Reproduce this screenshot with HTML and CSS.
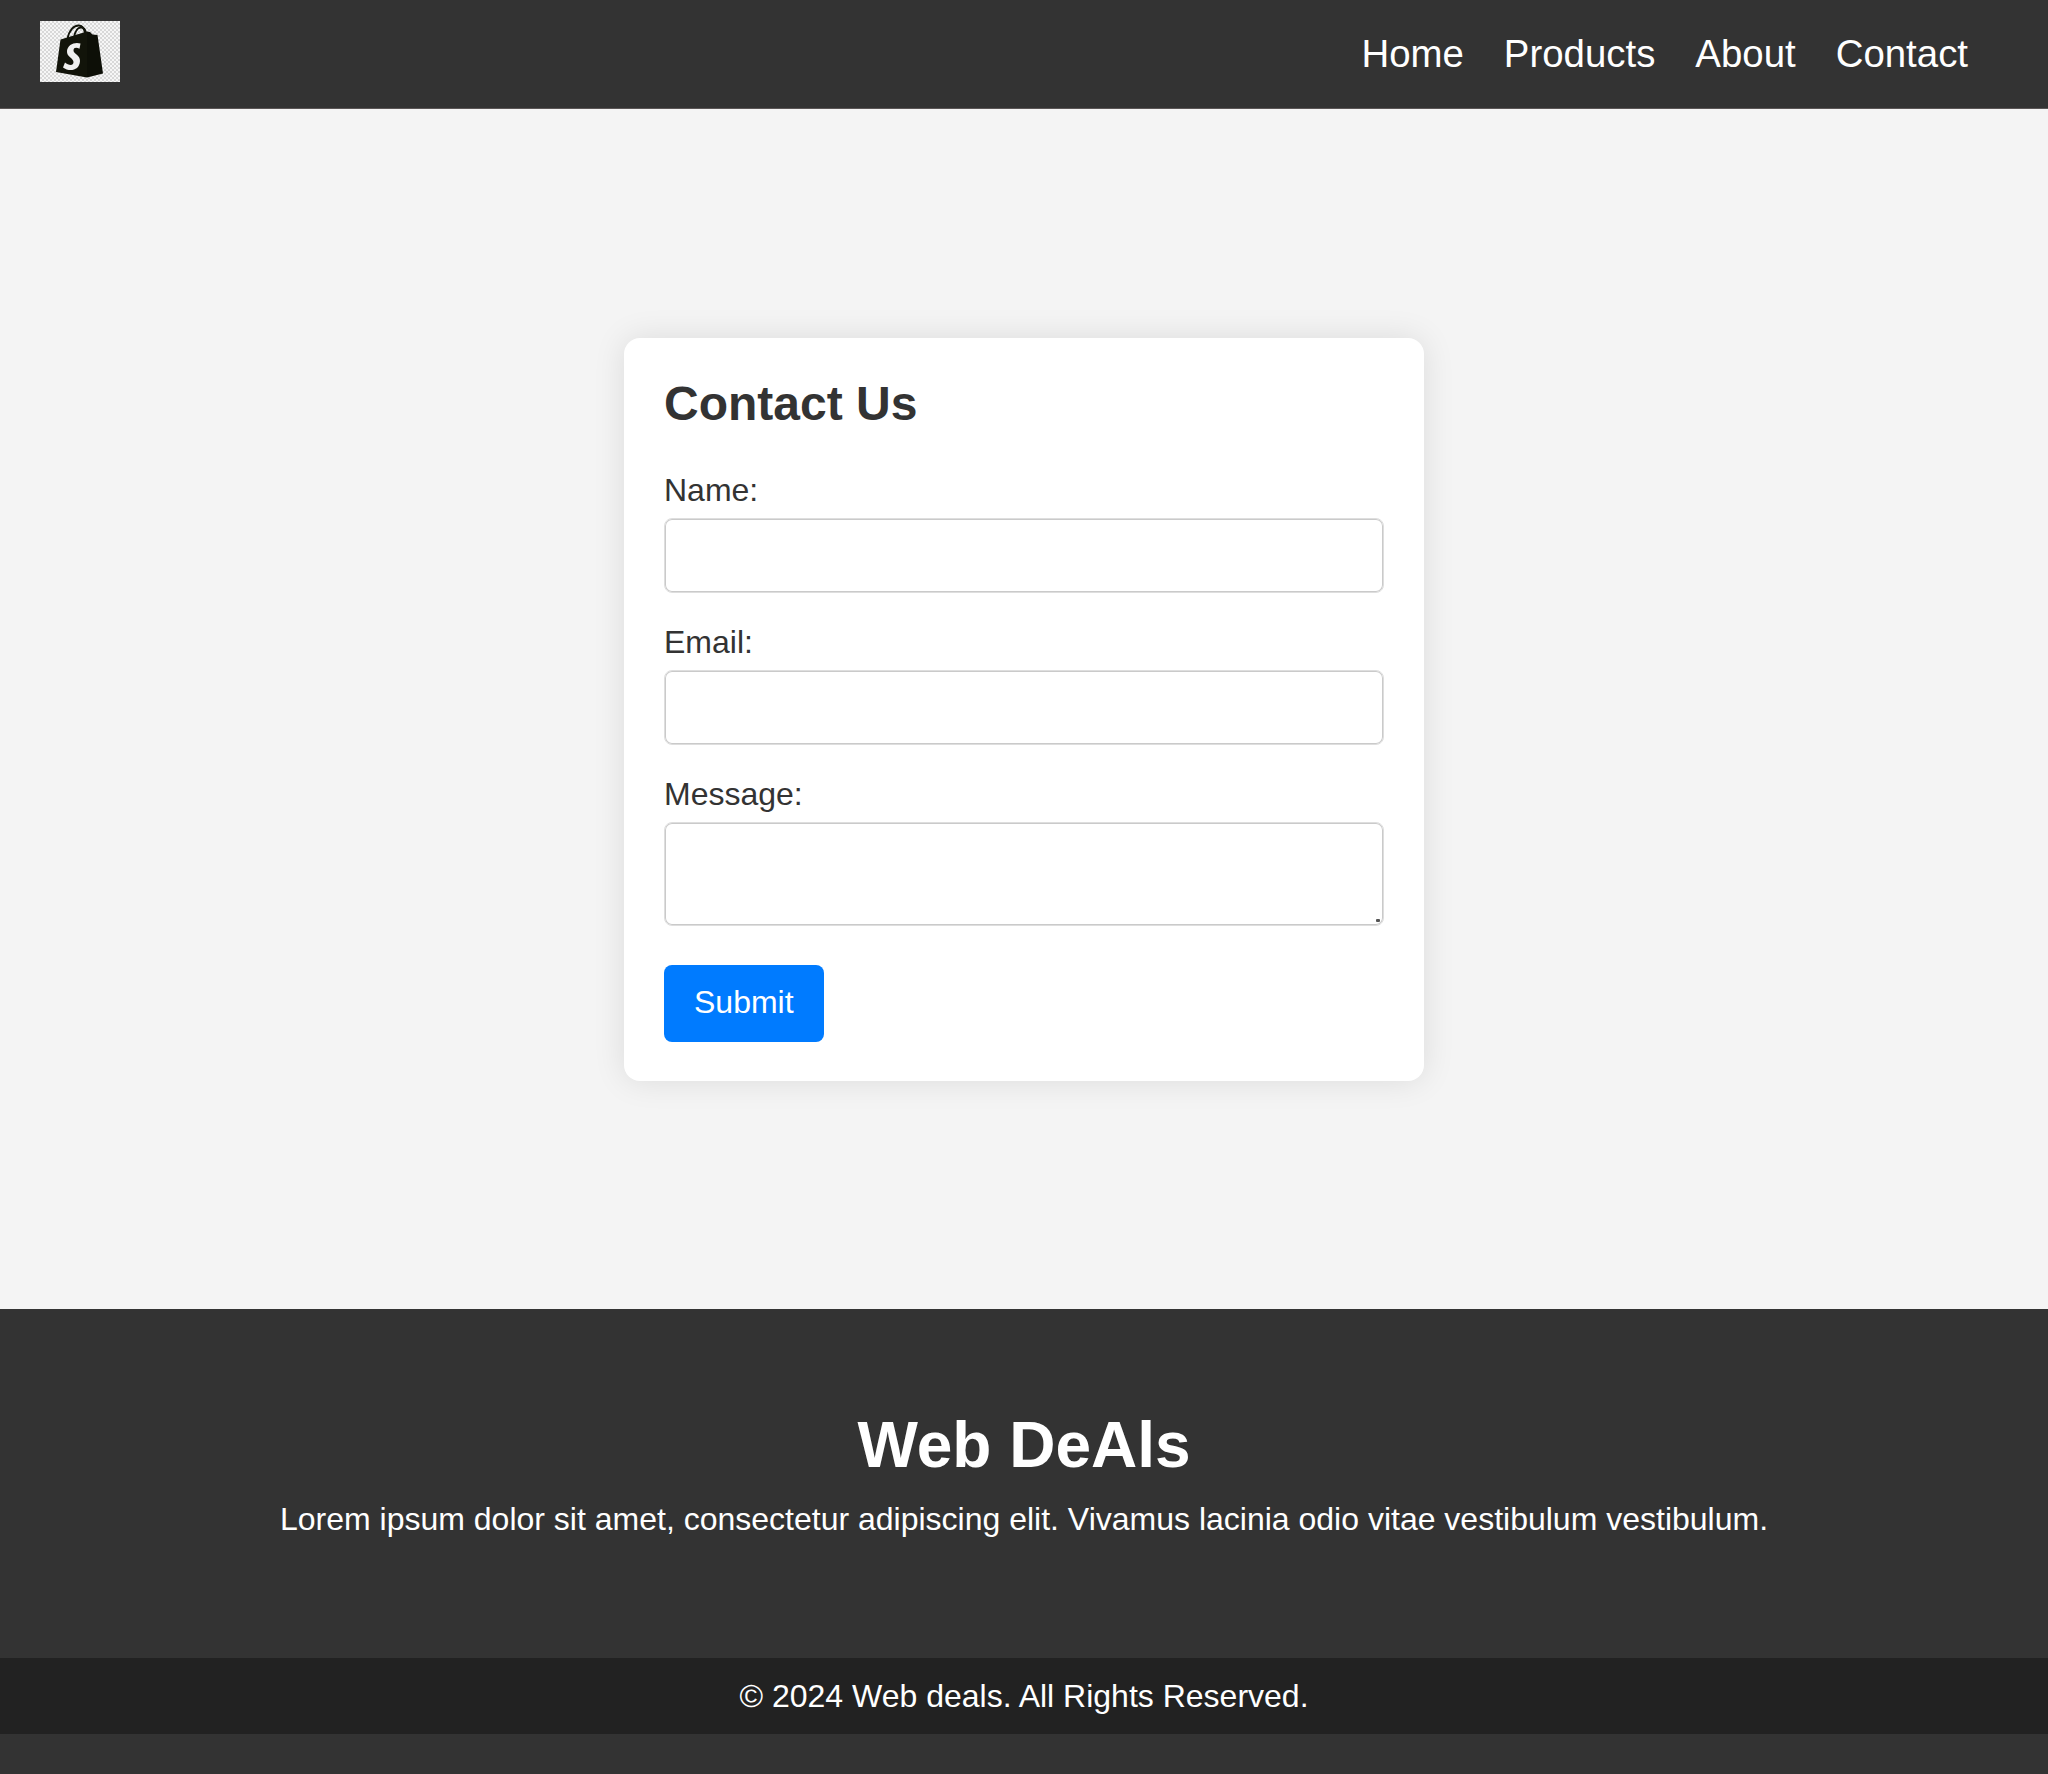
FILE: index.html
```html
<!DOCTYPE html>
<html lang="en">
<head>
<meta charset="utf-8">
<title>Contact - Web Deals</title>
<link rel="stylesheet" href="styles.css">
</head>
<body>
<header class="header">
  <svg class="logo" viewBox="0 0 80 61" role="img" aria-label="Web Deals">
    <defs>
      <pattern id="checker" width="4" height="4" patternUnits="userSpaceOnUse">
        <rect width="4" height="4" fill="#f6f6f6"/>
        <path d="M0 0h2v2H0zM2 2h2v2H2z" fill="#d8d8d8"/>
      </pattern>
    </defs>
    <rect width="80" height="61" fill="url(#checker)"/>
    <g fill="none" stroke="#12140a" stroke-width="1.8">
      <path d="M27.500 18C29 9 34 4.500 38.500 4.500C43 4.500 44.500 8 45 13"/>
      <path d="M34 17C35 10 38 6.500 41 6.500C44 6.500 45.500 9 46 12"/>
    </g>
    <path d="M20.500 18.500L47 10.500L47 56.500L16 51Z" fill="#12140a"/>
    <path d="M47 10.500L50 11L52.500 13.500L57.500 14L63 52.500L47 56.500Z" fill="#0d0f07"/>
    <path d="M40.500 22.500C35 20.500 27.500 23.500 27 30C26.500 36 33.500 37 33.500 41C33.500 45.500 28 44 25 41.500L23 46.500C29 51 39.500 50 40 40C40.300 34 33.500 33 33.500 29.500C33.500 26 37 26.500 39.500 27.800Z" fill="#f0f0f0"/>
  </svg>
  <nav class="nav">
    <a href="#">Home</a>
    <a href="#">Products</a>
    <a href="#">About</a>
    <a href="#">Contact</a>
  </nav>
</header>
<main class="main">
  <form class="card">
    <h2 class="card-title">Contact Us</h2>
    <label class="label" for="name">Name:</label>
    <input class="field" id="name" type="text">
    <label class="label" for="email">Email:</label>
    <input class="field" id="email" type="email">
    <label class="label" for="message">Message:</label>
    <div class="message">
      <textarea class="field field-message" id="message"></textarea>
      <span class="grip"></span>
    </div>
    <button class="submit" type="button">Submit</button>
  </form>
</main>
<footer class="footer">
  <div class="about">
    <h1 class="brand">Web DeAls</h1>
    <p class="text">Lorem ipsum dolor sit amet, consectetur adipiscing elit. Vivamus lacinia odio vitae vestibulum vestibulum.</p>
  </div>
  <p class="copyright">© 2024 Web deals. All Rights Reserved.</p>
</footer>
</body>
</html>
```
FILE: styles.css
```css
* { box-sizing: border-box; margin: 0; padding: 0; }

body {
  font: 32px/37px "Liberation Sans", Arial, sans-serif;
  color: #333;
  background: #f4f4f4;
}

.header {
  display: flex;
  justify-content: space-between;
  align-items: flex-start;
  height: 109px;
  padding: 21px 80px 0 40px;
  background: #333;
  border-bottom: 1px solid #5b5656;
}

.logo { display: block; width: 80px; height: 61px; }

.nav { display: flex; gap: 40px; padding-top: 11px; }
.nav a { color: #fff; font-size: 38.4px; line-height: 44px; text-decoration: none; }

.main {
  display: flex;
  justify-content: center;
  align-items: center;
  height: 1200px;
}

.card {
  width: 800px;
  height: 743px;
  margin-top: 1px;
  padding: 38px 40px 40px;
  background: #fff;
  border-radius: 16px;
  box-shadow: 0 0 32px rgba(0, 0, 0, 0.1);
}

.card-title { font-size: 48px; line-height: 56px; margin-bottom: 40px; }

.label { display: block; height: 37px; margin-bottom: 9px; }

.field {
  display: block;
  width: 100%;
  height: 75px;
  margin-bottom: 31px;
  padding: 20px;
  border: 1px solid #dedede;
  border-radius: 8px;
  box-shadow: inset 0 0 0 1px #cacaca;
  font: inherit;
  outline: none;
}

.message { position: relative; margin-bottom: 39px; }
.field-message { height: 104px; margin: 0; resize: none; }

.grip {
  position: absolute;
  right: 4px;
  bottom: 4px;
  width: 4px;
  height: 3px;
  border-radius: 1px;
  background: #555;
}

.submit {
  display: block;
  height: 77px;
  padding: 0 30px 2px;
  border: 0;
  border-radius: 8px;
  background: #007bff;
  color: #fff;
  font: inherit;
}

.footer {
  height: 465px;
  background: #333;
  color: #fff;
  text-align: center;
}

.about { height: 349px; padding-top: 99px; }
.brand { font-size: 64px; line-height: 74px; margin-bottom: 19px; }
.copyright { height: 76px; padding-top: 20px; background: #222; }
```
